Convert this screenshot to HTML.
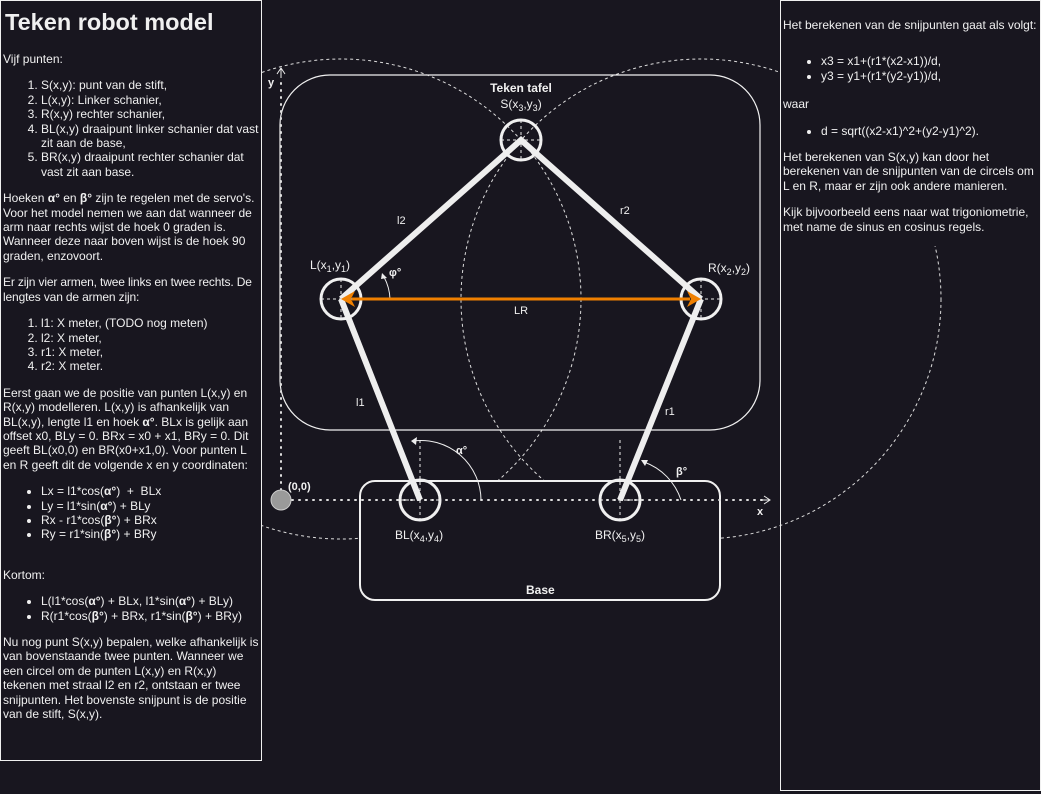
<!DOCTYPE html>
<html><head><meta charset="utf-8"><style>
body{margin:0;width:1041px;height:794px;background:#18161f;font-family:"Liberation Sans",Arial,sans-serif;color:#f0f0f0;position:relative;overflow:hidden;font-size:12px;line-height:14.4px}
.panel{position:absolute;box-sizing:border-box;border:1px solid #f0f0f0;padding:0 0 0 2px}
#l{left:0;top:0;width:262px;height:761px;background:#18161f;z-index:2}
#r{left:780px;top:0;width:261px;height:791px;z-index:2}
#rbg{position:absolute;left:781px;top:1px;width:259px;height:245px;background:#18161f;z-index:1}
h1{font-size:23.5px;margin:8px 0 0 2px;line-height:26px}
p{margin:12px 0}
#l p:first-of-type{margin-top:17px}
ol,ul{margin:12px 0;padding-left:38px}
svg{position:absolute;left:0;top:0;z-index:1}
</style></head><body>
<svg width="1041" height="794" viewBox="0 0 1041 794" font-family="Liberation Sans,Arial,sans-serif" fill="none">
<g stroke="#ddd" stroke-dasharray="3 3" stroke-width="1">
<circle cx="341" cy="299" r="240"/><circle cx="701" cy="299" r="240"/>
</g>
<rect x="280" y="75" width="480" height="355" rx="50" stroke="#f0f0f0" stroke-width="1.2"/>
<rect x="360" y="481" width="360" height="119" rx="15" fill="#18161f" stroke="#f0f0f0" stroke-width="2"/>
<g stroke="#ddd" stroke-width="2" stroke-dasharray="1 6" stroke-linecap="round">
<line x1="281" y1="490" x2="281" y2="80"/><line x1="292" y1="500" x2="762" y2="500"/>
</g>
<path d="M281 78V68M277 74l4-6 4 6" stroke="#eee" stroke-width="1"/>
<path d="M760 500h10M764 496l6 4-6 4" stroke="#eee" stroke-width="1"/>
<circle cx="281" cy="500" r="10" fill="#9a9a9a" stroke="#ccc"/>
<g stroke="#eee" stroke-width="1" stroke-dasharray="3 3">
<path d="M501 140h40M521 120v40M321 299h40M341 279v40M681 299h40M701 279v40M400 500h40M420 440v80M600 500h40M620 440v80"/>
</g>
<path d="M481 500A60 60 0 0 0 413 441" stroke="#eee"/><path d="M411 441l6-4-1 8z" fill="#eee"/>
<path d="M681 500A60 60 0 0 0 644 462" stroke="#eee"/><path d="M641 460l7 0-3 6z" fill="#eee"/>
<path d="M390 299A50 50 0 0 0 384 277" stroke="#eee"/><path d="M382 273l5 5-6 1z" fill="#eee"/>
<g stroke="#eee" stroke-width="6" stroke-linecap="butt">
<path d="M341 299L521 140L701 299"/><path d="M341 299L420 500M701 299L620 500"/>
</g>
<g stroke="#f0f0f0" stroke-width="3" fill="none">
<circle cx="521" cy="140" r="20"/><circle cx="341" cy="299" r="20"/><circle cx="701" cy="299" r="20"/><circle cx="420" cy="500" r="20"/><circle cx="620" cy="500" r="20"/>
</g>
<line x1="352" y1="299" x2="690" y2="299" stroke="#f08000" stroke-width="3"/>
<path d="M341 299l14-8-4 8 4 8zM701 299l-14-8 4 8-4 8z" fill="#f08000"/>
<g fill="#f0f0f0" font-size="11">
<text x="521" y="92" text-anchor="middle" font-weight="bold" font-size="12">Teken tafel</text>
<text x="521" y="108" text-anchor="middle" font-size="12">S(x<tspan font-size="9" dy="3">3</tspan><tspan dy="-3">,y</tspan><tspan font-size="9" dy="3">3</tspan><tspan dy="-3">)</tspan></text>
<text x="310" y="269" font-size="12">L(x<tspan font-size="9" dy="3">1</tspan><tspan dy="-3">,y</tspan><tspan font-size="9" dy="3">1</tspan><tspan dy="-3">)</tspan></text>
<text x="708" y="272" font-size="12">R(x<tspan font-size="9" dy="3">2</tspan><tspan dy="-3">,y</tspan><tspan font-size="9" dy="3">2</tspan><tspan dy="-3">)</tspan></text>
<text x="395" y="539" font-size="12">BL(x<tspan font-size="9" dy="3">4</tspan><tspan dy="-3">,y</tspan><tspan font-size="9" dy="3">4</tspan><tspan dy="-3">)</tspan></text>
<text x="595" y="539" font-size="12">BR(x<tspan font-size="9" dy="3">5</tspan><tspan dy="-3">,y</tspan><tspan font-size="9" dy="3">5</tspan><tspan dy="-3">)</tspan></text>
<text x="397" y="224">l2</text><text x="620" y="214">r2</text>
<text x="356" y="406">l1</text><text x="665" y="415">r1</text>
<text x="514" y="314">LR</text>
<text x="389" y="276" font-weight="bold">φ°</text>
<text x="456" y="454" font-weight="bold">α°</text>
<text x="676" y="475" font-weight="bold">β°</text>
<text x="288" y="490" font-weight="bold">(0,0)</text>
<text x="526" y="594" font-weight="bold" font-size="12">Base</text>
<text x="268" y="86" font-weight="bold">y</text>
<text x="757" y="515" font-weight="bold">x</text>
</g>
</svg>
<div id="rbg"></div>
<div class="panel" id="l">
<h1>Teken robot model</h1>
<p>Vijf punten:</p>
<ol><li>S(x,y): punt van de stift,</li><li>L(x,y): Linker schanier,</li><li>R(x,y) rechter schanier,</li><li>BL(x,y) draaipunt linker schanier dat vast zit aan de base,</li><li>BR(x,y) draaipunt rechter schanier dat vast zit aan base.</li></ol>
<p>Hoeken <b>α°</b> en <b>β°</b> zijn te regelen met de servo's. Voor het model nemen we aan dat wanneer de arm naar rechts wijst de hoek 0 graden is. Wanneer deze naar boven wijst is de hoek 90 graden, enzovoort.</p>
<p style="letter-spacing:-0.15px">Er zijn vier armen, twee links en twee rechts. De lengtes van de armen zijn:</p>
<ol><li>l1: X meter, (TODO nog meten)</li><li>l2: X meter,</li><li>r1: X meter,</li><li>r2: X meter.</li></ol>
<p>Eerst gaan we de positie van punten L(x,y) en R(x,y) modelleren. L(x,y) is afhankelijk van BL(x,y), lengte l1 en hoek <b>α°</b>. BLx is gelijk aan offset x0, BLy = 0. BRx = x0 + x1, BRy = 0. Dit geeft BL(x0,0) en BR(x0+x1,0). Voor punten L<br>en R geeft dit de volgende x en y coordinaten:</p>
<ul><li>Lx = l1*cos(<b>α°</b>)&nbsp; +&nbsp; BLx</li><li>Ly = l1*sin(<b>α°</b>) + BLy</li><li>Rx - r1*cos(<b>β°</b>) + BRx</li><li>Ry = r1*sin(<b>β°</b>) + BRy</li></ul>
<p style="margin-top:26px">Kortom:</p>
<ul><li>L(l1*cos(<b>α°</b>) + BLx, l1*sin(<b>α°</b>) + BLy)</li><li>R(r1*cos(<b>β°</b>) + BRx, r1*sin(<b>β°</b>) + BRy)</li></ul>
<p>Nu nog punt S(x,y) bepalen, welke afhankelijk is<br>van bovenstaande twee punten. Wanneer we<br>een circel om de punten L(x,y) en R(x,y)<br>tekenen met straal l2 en r2, ontstaan er twee<br>snijpunten. Het bovenste snijpunt is de positie<br>van de stift, S(x,y).</p>
</div>
<div class="panel" id="r">
<p style="margin-top:17px">Het berekenen van de snijpunten gaat als volgt:</p>
<ul style="margin-top:22px"><li>x3 = x1+(r1*(x2-x1))/d,</li><li>y3 = y1+(r1*(y2-y1))/d,</li></ul>
<p style="margin-top:14px">waar</p>
<ul><li>d = sqrt((x2-x1)^2+(y2-y1)^2).</li></ul>
<p>Het berekenen van S(x,y) kan door het<br>berekenen van de snijpunten van de circels om<br>L en R, maar er zijn ook andere manieren.</p>
<p>Kijk bijvoorbeeld eens naar wat trigoniometrie,<br>met name de sinus en cosinus regels.</p>
</div>
</body></html>
